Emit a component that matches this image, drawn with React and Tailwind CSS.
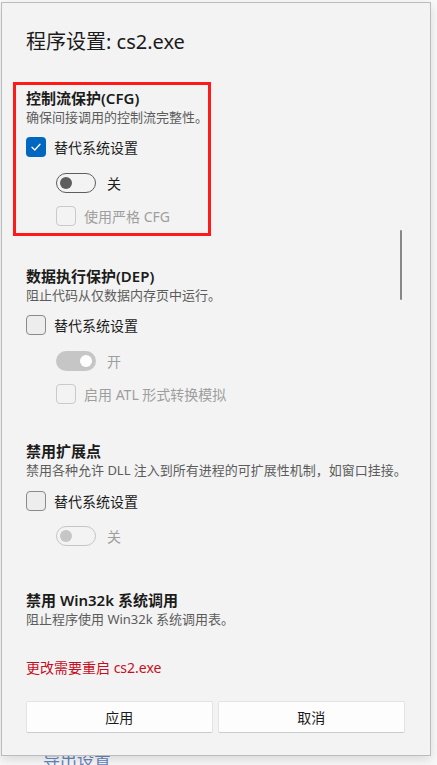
import React from 'react';

const font = { fontFamily: '"Noto Sans", "Noto Sans CJK SC", sans-serif' };

const Check = ({ checked, disabled, label }) => (
  <div className="flex items-center h-5">
    {checked ? (
      <div className="w-5 h-5 rounded-[4px] bg-[#0067c0] flex items-center justify-center">
        <svg width="12" height="12" viewBox="0 0 12 12" fill="none">
          <path d="M2 6.3 L4.8 9 L10 3.3" stroke="white" strokeWidth="1.3" strokeLinecap="round" strokeLinejoin="round" />
        </svg>
      </div>
    ) : (
      <div className={`w-5 h-5 rounded-[4px] border ${disabled ? 'border-[#c9c9c9] bg-[#f3f3f3]' : 'border-[#8a8a8a] bg-[#ededed]'}`} />
    )}
    <span className={`ml-[8px] text-[14px] ${disabled ? 'text-[#9e9e9e]' : 'text-[#1b1b1b]'}`}>{label}</span>
  </div>
);

const Toggle = ({ on, disabled, label }) => {
  let track = 'border border-[#5d5d5d] bg-transparent justify-start';
  let dot = 'bg-[#5d5d5d] ml-[3px]';
  if (disabled && on) {
    track = 'bg-[#c6c6c6] justify-end';
    dot = 'bg-white mr-[4px]';
  } else if (disabled) {
    track = 'border border-[#c6c6c6] justify-start';
    dot = 'bg-[#c6c6c6] ml-[3px]';
  }
  return (
    <div className="flex items-center h-5 ml-[30px]">
      <div className={`w-10 h-5 rounded-full flex items-center ${track}`}>
        <div className={`w-3 h-3 rounded-full ${dot}`} />
      </div>
      <span className={`ml-[11px] text-[14px] ${disabled ? 'text-[#9e9e9e]' : 'text-[#1b1b1b]'}`}>{label}</span>
    </div>
  );
};

const Heading = ({ title, desc }) => (
  <>
    <div className="text-[15px] leading-5 font-semibold text-[#1b1b1b]">{title}</div>
    <div className="text-[13px] leading-[18px] text-[#5c5c5c] whitespace-nowrap">{desc}</div>
  </>
);

export default function App() {
  return (
    <div className="w-[437px] h-[765px] overflow-hidden bg-[#f8f8f8]" style={font}>
      <div className="relative z-10 ml-[1px] mt-[2px] w-[430px] h-[754px] border border-[#bcbcbc] bg-[#f3f3f3] shadow-[0_4px_10px_rgba(0,0,0,0.12)]">
        <div className="pl-[24px] pr-[24px]">
          <div className="mt-[25px] text-[20px] leading-7 text-[#1b1b1b]">程序设置: cs2.exe</div>

          <div className="mt-[26px] -ml-[13px] w-[198px] border-[3px] border-[#ff1a1a] pl-[10px] pt-[3px] pb-[7px]">
            <Heading title="控制流保护(CFG)" desc="确保间接调用的控制流完整性。" />
            <div className="mt-[11px]"><Check checked label="替代系统设置" /></div>
            <div className="mt-[16px]"><Toggle label="关" /></div>
            <div className="mt-[13px] ml-[30px]"><Check disabled label="使用严格 CFG" /></div>
          </div>

          <div className="mt-[30px]">
            <Heading title="数据执行保护(DEP)" desc="阻止代码从仅数据内存页中运行。" />
            <div className="mt-[11px]"><Check label="替代系统设置" /></div>
            <div className="mt-[16px]"><Toggle on disabled label="开" /></div>
            <div className="mt-[13px] ml-[30px]"><Check disabled label="启用 ATL 形式转换模拟" /></div>
          </div>

          <div className="mt-[37px]">
            <Heading title="禁用扩展点" desc="禁用各种允许 DLL 注入到所有进程的可扩展性机制，如窗口挂接。" />
            <div className="mt-[12px]"><Check label="替代系统设置" /></div>
            <div className="mt-[15px]"><Toggle disabled label="关" /></div>
          </div>

          <div className="mt-[44px]">
            <Heading title="禁用 Win32k 系统调用" desc="阻止程序使用 Win32k 系统调用表。" />
          </div>

          <div className="mt-[31px] text-[14px] leading-[18px] text-[#c50f1f]">更改需要重启 cs2.exe</div>

          <div className="mt-[24px] flex gap-[5px] pr-[1px]">
            <button className="w-[187px] h-[32px] bg-[#fdfdfd] border border-[#e3e3e3] border-b-[#cccccc] rounded-[2px] text-[14px] text-[#1b1b1b]">应用</button>
            <button className="w-[188px] h-[32px] bg-[#fdfdfd] border border-[#e3e3e3] border-b-[#cccccc] rounded-[2px] text-[14px] text-[#1b1b1b]">取消</button>
          </div>
        </div>

        <div className="absolute left-[398px] top-[227px] w-[2px] h-[70px] rounded-full bg-[#878787]" />
      </div>
      <div className="-mt-[8px] ml-[43px] text-[17px] leading-6 text-[#6684bd]">导出设置</div>
    </div>
  );
}
